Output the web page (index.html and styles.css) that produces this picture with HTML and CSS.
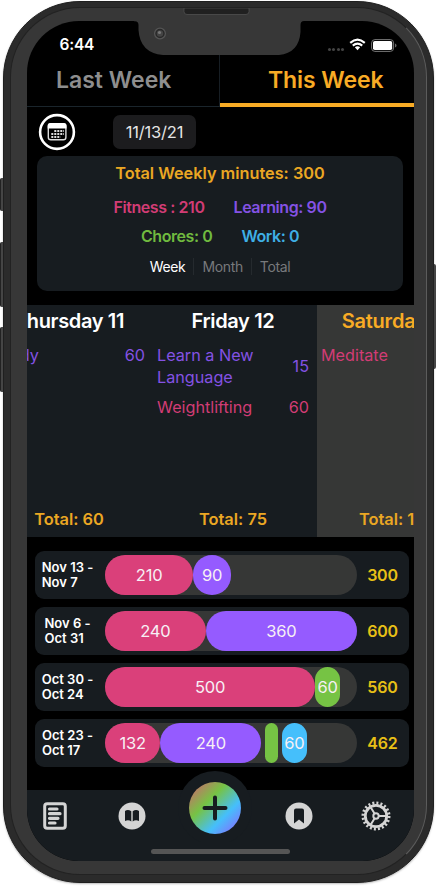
FILE: index.html
```html
<!DOCTYPE html>
<html lang="en">
<head>
<meta charset="utf-8">
<title>Weekly minutes</title>
<link rel="stylesheet" href="styles.css">
</head>
<body>
<div class="device">
  <i class="key key-mute"></i><i class="key key-up"></i><i class="key key-down"></i><i class="key key-power"></i>
  <div class="bezel">
    <svg class="notch" width="170" height="50" viewBox="0 0 170 50">
      <path d="M-2 13.200H1Q4.500 13.500 4.500 17V22Q6 45 29 47H145Q165 45 166.500 24V17Q166.500 13 170 13V0H-2Z" fill="#373737"/>
      <path d="M50 0V3.500Q50 6.500 53 6.500H112Q115 6.500 115 3.500V0Z" fill="#202020" stroke="#555" stroke-width=".7"/>
      <circle cx="26" cy="25.500" r="5.400" fill="#292929" stroke="#555" stroke-width="1.300"/>
      <circle cx="26" cy="25.500" r="3.200" fill="#444"/><circle cx="25.500" cy="24.500" r="1.600" fill="#777"/>
    </svg>
    <main class="screen">
      <header class="status">
        <span class="clock">6:44</span>
        <span class="signal"><i></i><i></i><i></i><i></i></span>
        <svg class="wifi" width="18" height="13" viewBox="0 0 18 13" fill="none" stroke="#fff" stroke-width="2.200"><path d="M1.300 4.800Q9-2.100 16.700 4.800M4 7.700Q9 3.300 14 7.700"/><path d="M9 12.500L6.200 9.500Q9 7.300 11.800 9.500Z" fill="#fff" stroke="none"/></svg>
        <svg class="battery" width="26" height="13" viewBox="0 0 26 13"><rect x=".6" y=".6" width="22" height="11.800" rx="3.300" fill="none" stroke="#777"/><rect x="2" y="2" width="19.200" height="9" rx="1.800" fill="#fff"/><path d="M24 4.500Q25.500 5 25.500 6.500T24 8.500Z" fill="#666"/></svg>
      </header>
      <nav class="tabs"><a class="tab tab-last">Last Week</a><a class="tab tab-this">This Week</a></nav>
      <div class="dates">
        <svg width="38" height="38" viewBox="0 0 38 38"><circle cx="19" cy="19" r="16.900" fill="none" stroke="#fff" stroke-width="2.600"/><rect x="10.300" y="10.800" width="17.600" height="16" rx="2.600" fill="none" stroke="#ddd" stroke-width="1.400"/><path d="M9.700 15.500V13Q9.700 10 12.700 10H25.500Q28.500 10 28.500 13V15.500Z" fill="#fff"/><path d="M16.300 18H26M13.300 21H26M13.300 24H22.500" stroke="#ddd" stroke-width="1.800" stroke-dasharray="2 1"/></svg>
        <span class="date-pill">11/13/21</span>
      </div>
      <section class="summary">
        <h2>Total Weekly minutes: 300</h2>
        <div class="pair pair-top"><span class="pink">Fitness : 210</span><span class="purple">Learning: 90</span></div>
        <div class="pair pair-bottom"><span class="green">Chores: 0</span><span class="blue">Work: 0</span></div>
        <div class="range"><b>Week</b><span>Month</span><span>Total</span></div>
      </section>
      <section class="days">
        <article class="day thursday"><h3>Thursday 11</h3><div class="entry purple"><span>Study</span><span>60</span></div><footer>Total: 60</footer></article>
        <article class="day"><h3>Friday 12</h3><div class="entry purple"><span>Learn a New<br>Language</span><span>15</span></div><div class="entry pink"><span>Weightlifting</span><span>60</span></div><footer>Total: 75</footer></article>
        <article class="day today"><h3>Saturday 13</h3><div class="entry pink"><span>Meditate</span><span></span></div><footer>Total: 165</footer></article>
      </section>
      <section class="history">
        <div class="week"><span class="period"><span>Nov 13 -<br>Nov 7</span></span><div class="bar"><i class="fitness" style="width:88.2px">210</i><i class="learning" style="width:37.8px">90</i></div><b>300</b></div>
        <div class="week"><span class="period"><span>Nov 6 -<br>Oct 31</span></span><div class="bar"><i class="fitness" style="width:100.8px">240</i><i class="learning" style="width:151.2px">360</i></div><b>600</b></div>
        <div class="week"><span class="period"><span>Oct 30 -<br>Oct 24</span></span><div class="bar"><i class="fitness" style="width:210px">500</i><i class="chores" style="width:25.2px">60</i></div><b>560</b></div>
        <div class="week"><span class="period"><span>Oct 23 -<br>Oct 17</span></span><div class="bar"><i class="fitness" style="width:55.4px">132</i><i class="learning" style="width:100.8px">240</i><i class="chores small" style="width:12.6px"></i><i class="work" style="width:25.2px">60</i></div><b>462</b></div>
      </section>
      <nav class="bottom">
        <svg width="24" height="28" viewBox="0 0 24 28"><rect x="1.700" y="1.700" width="20.600" height="24.600" rx="2.500" fill="none" stroke="#d4d4d4" stroke-width="3"/><path d="M6.500 7H14M6.500 11.700H17M6.500 16.300H15M6.500 21H12" stroke="#d4d4d4" stroke-width="3.200" stroke-linecap="round"/></svg>
        <svg class="book" width="28" height="28" viewBox="0 0 28 28"><circle cx="14" cy="14" r="13.500" fill="#d4d4d4"/><path d="M13.300 9.300Q10 7.100 7 9V19Q10.500 17.300 13.300 19.500ZM14.700 9.300Q18 7.100 21 9V19Q17.500 17.300 14.700 19.500Z" fill="#171c20"/></svg>
        <div class="add"><svg width="52" height="52" viewBox="0 0 52 52"><path d="M26 15.500V36.500M15.500 26H36.500" stroke="#171c20" stroke-width="4" stroke-linecap="round"/></svg></div>
        <svg class="saved" width="28" height="28" viewBox="0 0 28 28"><circle cx="14" cy="14" r="13.500" fill="#d4d4d4"/><path d="M9 8.500Q9 6.500 11 6.500H17Q19 6.500 19 8.500V21.500L14 17.500L9 21.500Z" fill="#171c20"/></svg>
        <svg class="gear" width="30" height="30" viewBox="0 0 30 30" fill="none" stroke="#d4d4d4"><circle cx="15" cy="15" r="10.700" stroke-width="2.800"/><circle cx="15" cy="15" r="13" stroke-width="3" stroke-dasharray="2 2.084"/><circle cx="15" cy="15" r="2.700" stroke-width="2"/><path d="M18 15H25M13.500 12.500L9.500 6M13.500 17.500L9.500 24" stroke-width="2"/></svg>
      </nav>
      <div class="home"><i></i></div>
    </main>
  </div>
</div>
</body>
</html>
```

FILE: styles.css
```css
* { box-sizing: border-box; }
html, body { margin: 0; background: #fff; }
body { width: 437px; height: 886px; overflow: hidden; padding: 1px 3px; font-family: Inter, "Liberation Sans", sans-serif; font-feature-settings: "calt" 0; }
i { font-style: normal; }
.device { position: relative; width: 431px; height: 882px; border-radius: 77px; background: #2b2b2b; padding: 5px 7px; border: 1px solid #1f1f1f; box-shadow: 0 1px 2px #bbb; }
.bezel { position: relative; width: 417px; height: 868px; margin-left: -1px; background: #373737; border-radius: 70px; border: 1px solid #222; border-right-color: #5c5c5c; padding: 13px 16px; }
.key { position: absolute; left: -4px; width: 3px; background: #454545; border-left: 1px solid #222; border-radius: 2px 0 0 2px; }
.key-mute { top: 176px; height: 33px; }
.key-up { top: 240px; height: 65px; }
.key-down { top: 325px; height: 65px; }
.key-power { left: auto; right: -3px; top: 262px; height: 105px; border-radius: 0 2px 2px 0; }
.screen { width: 387px; height: 840px; background: #000; border-radius: 52px; overflow: hidden; color: #fff; display: flex; flex-direction: column; }
.notch { position: absolute; left: 123px; top: 0; z-index: 2; }
.status { height: 34px; display: flex; align-items: center; padding: 14px 17px 0 32.500px; }
.clock { font-size: 15.5px; font-weight: 600; flex: 1; line-height: 20px; letter-spacing: -.2px; }
.signal { display: flex; gap: 1.500px; padding-top: 8px; margin-right: 5px; }
.signal i { width: 3px; height: 3px; border-radius: 50%; background: #444; }
.wifi { margin-right: 5px; margin-top: -1px; width: 17px; }
.tabs { display: flex; height: 52px; flex: none; }
.tab { display: flex; align-items: center; font-size: 23px; font-weight: 600; line-height: 24px; }
.tab-last { width: 193px; padding: 0 0 2px 29px; color: #8e8e8e; border-right: 1px solid #171e24; border-bottom: 1px solid #1a252c; }
.tab-this { flex: 1; padding: 2px 0 0 48px; color: #f8ab25; border-bottom: 4px solid #f8ab25; letter-spacing: -.1px; }
.dates { height: 49px; flex: none; display: flex; align-items: center; padding: 1px 0 0 10.500px; gap: 37.500px; }
.date-pill { width: 83px; height: 34px; border-radius: 7px; background: #1c1c1e; display: flex; align-items: center; justify-content: center; font-size: 16.500px; color: #e4e4e4; letter-spacing: -.2px; }
.summary { margin: 0 11px 0 10px; height: 135px; flex: none; border-radius: 10px; background: #171c20; display: flex; flex-direction: column; align-items: center; }
.summary h2 { margin: 6px 0 14px; font-size: 16.300px; line-height: 22px; font-weight: 600; color: #eba723; }
.pair { display: flex; font-size: 16px; line-height: 19px; margin-bottom: 10px; gap: 29px; font-weight: 600; letter-spacing: -.42px; }
.pink { color: #d23c75; }
.purple { color: #8452e4; }
.green { color: #70ba3f; }
.blue { color: #3fafe5; }
.range { display: flex; align-items: center; font-size: 14px; line-height: 17px; color: #77797c; margin-top: 2px; letter-spacing: -.35px; }
.range b { font-weight: 400; color: #fff; }
.range span { border-left: 1px solid #252a2e; margin-left: 8px; padding-left: 8px; }
.days { margin-top: 14px; height: 232px; display: flex; flex: none; background: #171c20; }
.day { width: 164px; flex: none; display: flex; flex-direction: column; padding: 5px 8px 8px 4px; }
.thursday { margin-left: -38px; }
.thursday .entry { padding-left: 1.500px; }
.today { background: #363736; }
.day h3 { margin: 0 0 11px; font-size: 20px; line-height: 23px; font-weight: 600; text-align: center; white-space: nowrap; letter-spacing: -.35px; }
.today h3 { color: #f8ab25; letter-spacing: -.2px; }
.entry { display: flex; justify-content: space-between; align-items: center; font-size: 16.200px; line-height: 22px; margin-bottom: 8px; }
.day footer { margin-top: auto; text-align: center; font-size: 16.400px; line-height: 20px; font-weight: 600; color: #eba723; }
.history { display: flex; flex-direction: column; gap: 8px; padding: 14px 5px 0 8px; height: 253px; flex: none; }
.week { display: flex; align-items: center; height: 48px; flex: none; border-radius: 9px; background: #171c20; }
.period { width: 70px; display: flex; justify-content: center; padding-right: 5px; font-size: 13px; line-height: 15.500px; font-weight: 600; white-space: nowrap; }
.bar { width: 252px; height: 40px; flex: none; background: #363736; border-radius: 20px; display: flex; }
.bar i { flex: none; height: 40px; border-radius: 20px; display: flex; align-items: center; justify-content: center; font-size: 16.500px; letter-spacing: -.2px; color: #f7f0f5; }
.fitness { background: #da407a; }
.learning { background: #955bff; }
.chores { background: #76c344; }
.work { background: #45bffb; }
.bar .small { margin: 0 4px; }
.week b { flex: 1; text-align: center; font-size: 16px; font-weight: 600; color: #e8c016; letter-spacing: -.2px; padding-right: 1px; }
.bottom { height: 52px; flex: none; background: #171c20; display: flex; align-items: center; padding: 0 0 1px 16px; }
.bottom svg { flex: none; }
.book { margin-left: 50.500px; }
.add { width: 74px; height: 74px; border-radius: 50%; background: #171c20; display: flex; align-items: center; justify-content: center; margin: -16px 0 0 32.500px; flex: none; }
.add svg { border-radius: 50%; background: linear-gradient(135deg, #da5a74 0%, #76c344 37%, #45bffb 67%, #955bff 100%); }
.saved { margin-left: 32.500px; }
.gear { margin-left: 48px; }
.home { flex: 1; background: #171c20; display: flex; justify-content: center; padding-top: 7px; }
.home i { width: 139px; height: 5px; border-radius: 3px; background: #555; }
```
